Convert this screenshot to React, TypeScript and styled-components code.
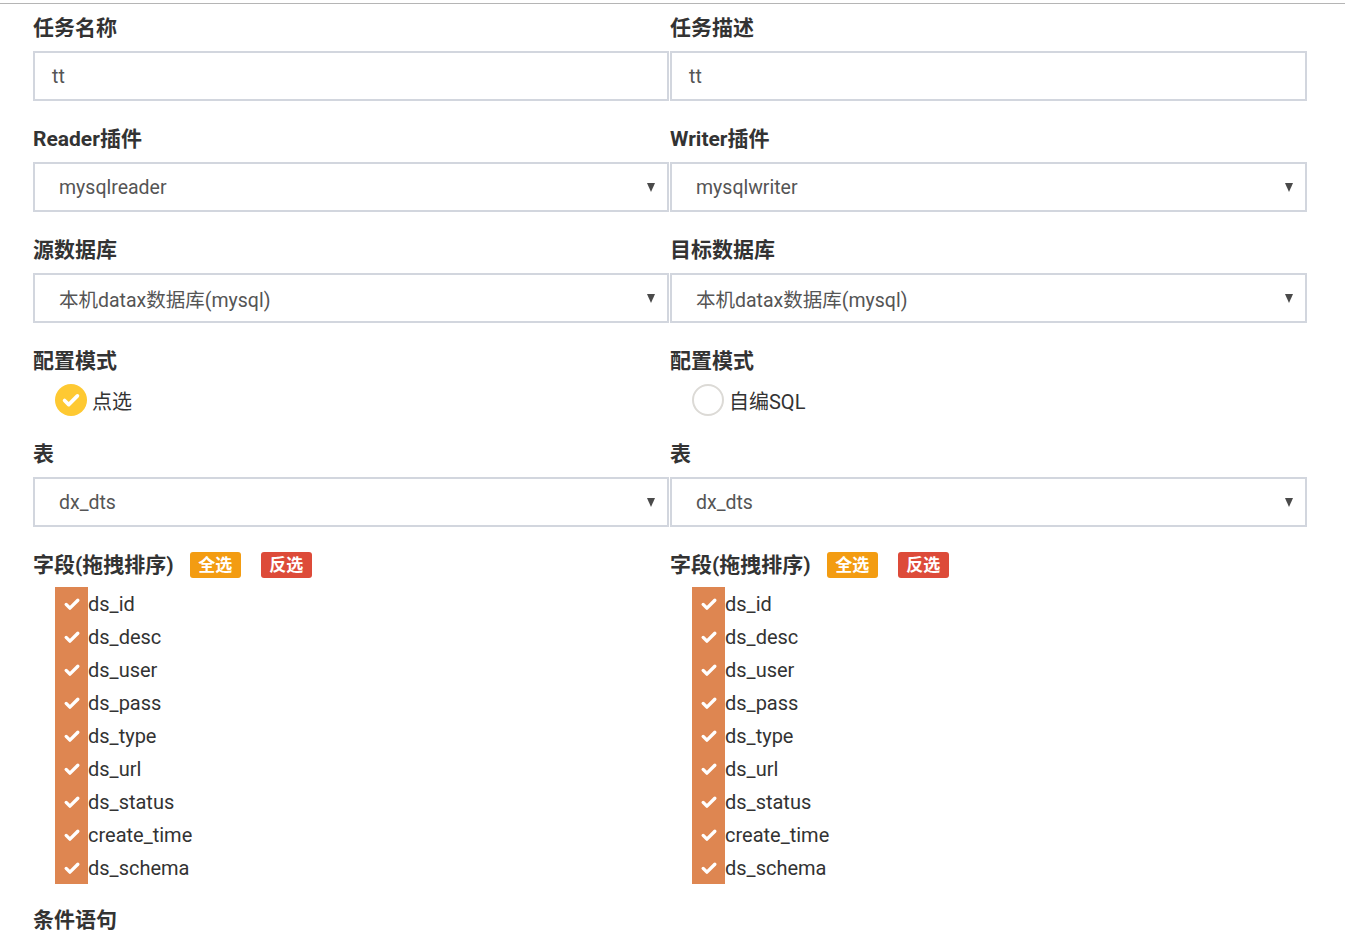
import React from "react";
import styled, { createGlobalStyle } from "styled-components";

const Global = createGlobalStyle`
  html, body { margin: 0; padding: 0; background: #fff; }
  body { font-family: Roboto, "Noto Sans CJK SC", sans-serif; color: #333; }
`;

const TopLine = styled.div`
  margin-top: 3px;
  border-top: 1px solid #b5b5b5;
`;

const Form = styled.div`
  display: grid;
  grid-template-columns: 636px 637px;
  column-gap: 1px;
  padding: 0 0 0 33px;
  align-items: start;
`;

const Group = styled.div<{ $mb?: number }>`
  display: flex;
  flex-direction: column;
  margin-bottom: ${(p) => (p.$mb ?? 15)}px;
`;

const Label = styled.div<{ $mt?: number }>`
  font-family: Roboto, "Noto Sans CJK SC", sans-serif;
  font-weight: 700;
  font-size: 21px;
  line-height: 28px;
  height: 28px;
  color: #333;
  margin-top: ${(p) => p.$mt ?? 9}px;
  margin-bottom: 9px;
  display: flex;
  align-items: center;
  white-space: nowrap;
`;

const Box = styled.div<{ $pl?: number }>`
  box-sizing: border-box;
  height: 50px;
  border: 2px solid #d2d6de;
  display: flex;
  align-items: center;
  padding-left: ${(p) => p.$pl ?? 17}px;
  padding-right: 12px;
  font-size: 19.5px;
  color: #555;
  background: #fff;
`;

const Value = styled.span`
  flex: 1;
  white-space: nowrap;
`;

const Caret = styled.span`
  width: 0;
  height: 0;
  border-left: 4px solid transparent;
  border-right: 4px solid transparent;
  border-top: 9px solid #4a4a4a;
`;

const RadioRow = styled.div`
  display: flex;
  align-items: center;
  padding-left: 22px;
  height: 32px;
  gap: 5px;
  font-size: 20px;
  color: #333;
`;

const Circle = styled.span<{ $on: boolean }>`
  box-sizing: border-box;
  width: 32px;
  height: 32px;
  border-radius: 50%;
  display: flex;
  align-items: center;
  justify-content: center;
  background: ${(p) => (p.$on ? "#fec932" : "#fff")};
  border: ${(p) => (p.$on ? "none" : "2px solid #dcdad6")};
`;

const Btn = styled.span<{ $bg: string; $ml: number }>`
  display: inline-flex;
  align-items: center;
  justify-content: center;
  width: 51px;
  height: 26px;
  border-radius: 3px;
  background: ${(p) => p.$bg};
  color: #fff;
  font-size: 17px;
  font-weight: 700;
  margin-left: ${(p) => p.$ml}px;
`;

const List = styled.div`
  display: flex;
  flex-direction: column;
  padding-left: 22px;
  margin-top: -1px;
`;

const Item = styled.div`
  display: flex;
  align-items: center;
  height: 33px;
  font-size: 20px;
  color: #333;
`;

const Tick = styled.span`
  width: 33px;
  height: 33px;
  background: #de8651;
  display: flex;
  align-items: center;
  justify-content: center;
`;

const Check = ({ size = 20 }: { size?: number }) => (
  <svg width={size} height={size} viewBox="0 0 24 24" fill="none">
    <path d="M5 12.5l4.5 4.5L19 7.5" stroke="#fff" strokeWidth="4" strokeLinecap="round" strokeLinejoin="round" />
  </svg>
);

const fields = ["ds_id", "ds_desc", "ds_user", "ds_pass", "ds_type", "ds_url", "ds_status", "create_time", "ds_schema"];

const Select = ({ v }: { v: string }) => (
  <Box $pl={24}>
    <Value>{v}</Value>
    <Caret />
  </Box>
);

const Column = ({ side }: { side: "l" | "r" }) => {
  const left = side === "l";
  return (
    <div>
      <Group>
        <Label $mt={10}>{left ? "任务名称" : "任务描述"}</Label>
        <Box><Value>tt</Value></Box>
      </Group>
      <Group>
        <Label>{left ? "Reader插件" : "Writer插件"}</Label>
        <Select v={left ? "mysqlreader" : "mysqlwriter"} />
      </Group>
      <Group>
        <Label>{left ? "源数据库" : "目标数据库"}</Label>
        <Select v="本机datax数据库(mysql)" />
      </Group>
      <Group>
        <Label>配置模式</Label>
        <RadioRow>
          <Circle $on={left}>{left && <Check size={22} />}</Circle>
          {left ? "点选" : "自编SQL"}
        </RadioRow>
      </Group>
      <Group>
        <Label>表</Label>
        <Select v="dx_dts" />
      </Group>
      <Group $mb={0}>
        <Label>
          字段(拖拽排序)
          <Btn $bg="#f39c12" $ml={16}>全选</Btn>
          <Btn $bg="#dd4b39" $ml={20}>反选</Btn>
        </Label>
        <List>
          {fields.map((f) => (
            <Item key={f}>
              <Tick><Check /></Tick>
              {f}
            </Item>
          ))}
        </List>
      </Group>
      {left && (
        <Group>
          <Label $mt={22}>条件语句</Label>
        </Group>
      )}
    </div>
  );
};

export default function App() {
  return (
    <>
      <Global />
      <TopLine />
      <Form>
        <Column side="l" />
        <Column side="r" />
      </Form>
    </>
  );
}
